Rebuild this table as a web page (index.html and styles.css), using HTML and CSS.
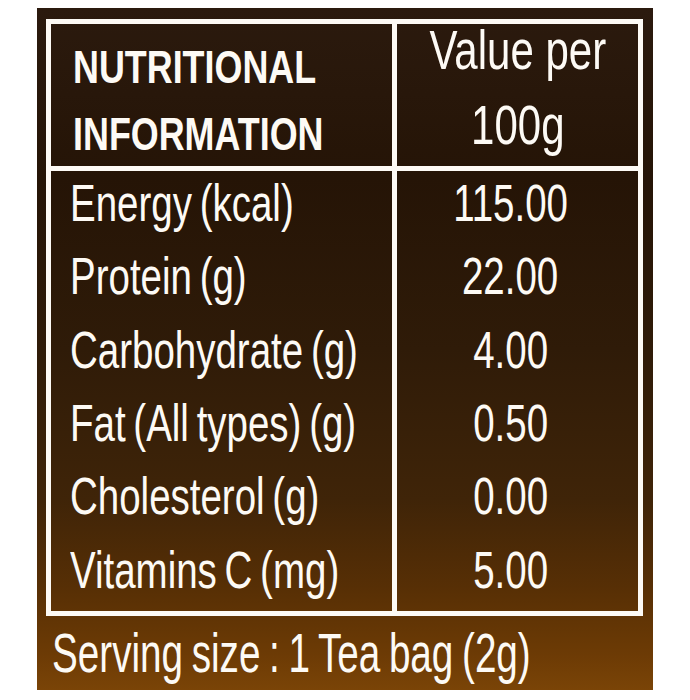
FILE: index.html
```html
<!DOCTYPE html>
<html>
<head>
<meta charset="utf-8">
<link rel="stylesheet" href="styles.css">
</head>
<body>
<div class="card">
  <div class="table">
    <div class="row head">
      <div class="cell label head-label"><span class="t">NUTRITIONAL<br>INFORMATION</span></div>
      <div class="cell value head-value"><span class="t">Value per<br>100g</span></div>
    </div>
    <div class="row"><div class="cell label"><span class="t">Energy (kcal)</span></div><div class="cell value"><span class="t">115.00</span></div></div>
    <div class="row"><div class="cell label"><span class="t">Protein (g)</span></div><div class="cell value"><span class="t">22.00</span></div></div>
    <div class="row"><div class="cell label"><span class="t">Carbohydrate (g)</span></div><div class="cell value"><span class="t">4.00</span></div></div>
    <div class="row"><div class="cell label"><span class="t">Fat (All types) (g)</span></div><div class="cell value"><span class="t">0.50</span></div></div>
    <div class="row"><div class="cell label"><span class="t">Cholesterol (g)</span></div><div class="cell value"><span class="t">0.00</span></div></div>
    <div class="row"><div class="cell label"><span class="t">Vitamins C (mg)</span></div><div class="cell value"><span class="t">5.00</span></div></div>
  </div>
  <div class="serving"><span class="t">Serving size : 1 Tea bag (2g)</span></div>
</div>
</body>
</html>
```
FILE: styles.css
```css
html, body {
  margin: 0;
  padding: 0;
  background: #ffffff;
}
body {
  padding: 8px 37px 10px 37px;
  font-family: "Liberation Sans", Arial, sans-serif;
  color: #fdfaf5;
}
.card {
  width: 616px;
  height: 682px;
  box-sizing: border-box;
  padding: 11px 10px 0 9px;
  background: linear-gradient(180deg, #2b1a0e 0%, #251406 25%, #2f1b08 50%, #3f2408 72%, #572f05 85%, #6d3b05 95%, #7a4407 100%);
  overflow: hidden;
}
.table {
  border: 5px solid #fdfaf5;
  display: flex;
  flex-direction: column;
}
.row {
  display: grid;
  grid-template-columns: 346px 1fr;
  grid-template-rows: minmax(0, 1fr);
  height: 73.33px;
}
.row.head {
  height: 142px;
  border-bottom: 5px solid #fdfaf5;
}
.cell {
  display: flex;
  align-items: center;
  white-space: nowrap;
  font-size: 52px;
  padding-bottom: 9px;
  min-height: 0;
}
.t {
  display: inline-block;
  transform: scaleX(0.74);
}
.label {
  border-right: 5px solid #fdfaf5;
  padding-left: 19px;
  word-spacing: -4px;
}
.label .t {
  transform-origin: left center;
}
.value {
  justify-content: center;
  padding-right: 14px;
}
.value .t {
  transform-origin: center center;
}
.head-label {
  font-weight: bold;
  font-size: 46px;
  line-height: 67px;
  padding-left: 22px;
  padding-top: 12px;
  padding-bottom: 0;
}
.head-label .t {
  transform: scaleX(0.78);
}
.head-value {
  text-align: center;
  line-height: 75px;
  font-size: 56px;
  padding-right: 0;
  padding-left: 0;
  padding-bottom: 16px;
}
.head-value .t {
  transform: scaleX(0.75);
}
.serving {
  padding-left: 6px;
  font-size: 56px;
  line-height: 73px;
  white-space: nowrap;
  word-spacing: -3px;
}
.serving .t {
  transform: scaleX(0.69);
  transform-origin: left center;
}
```
